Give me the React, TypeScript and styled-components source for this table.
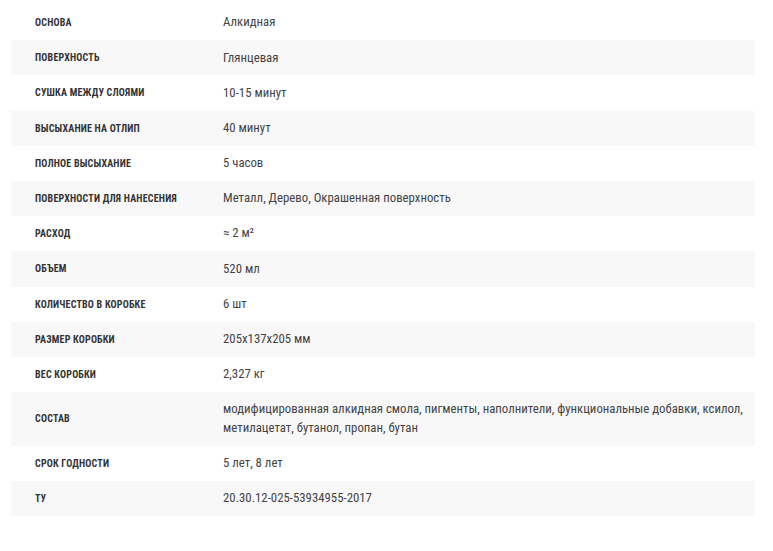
import styled, { createGlobalStyle } from "styled-components";

const GlobalStyle = createGlobalStyle`
    html, body {
        margin: 0;
        padding: 0;
        background: #fff;
    }
`

type Spec = {
    label: string,
    value: string,
}

const specs: Spec[] = [
    { label: "Основа", value: "Алкидная" },
    { label: "Поверхность", value: "Глянцевая" },
    { label: "Сушка между слоями", value: "10-15 минут" },
    { label: "Высыхание на отлип", value: "40 минут" },
    { label: "Полное высыхание", value: "5 часов" },
    { label: "Поверхности для нанесения", value: "Металл, Дерево, Окрашенная поверхность" },
    { label: "Расход", value: "≈ 2 м²" },
    { label: "Объем", value: "520 мл" },
    { label: "Количество в коробке", value: "6 шт" },
    { label: "Размер коробки", value: "205x137x205 мм" },
    { label: "Вес коробки", value: "2,327 кг" },
    { label: "Состав", value: "модифицированная алкидная смола, пигменты, наполнители, функциональные добавки, ксилол, метилацетат, бутанол, пропан, бутан" },
    { label: "Срок годности", value: "5 лет, 8 лет" },
    { label: "ТУ", value: "20.30.12-025-53934955-2017" },
]

function App() {
    return (
        <>
            <GlobalStyle />
            <Wrap>
                <Table>
                    {specs.map((s, i) => (
                        <Row key={s.label} striped={i % 2 === 1}>
                            <Label>{s.label}</Label>
                            <Value>{s.value}</Value>
                        </Row>
                    ))}
                </Table>
            </Wrap>
        </>
    )
}

export default App

const Wrap = styled.div`
    padding: 5px 18px 0 11px;
`

const Table = styled.div`
    display: flex;
    flex-direction: column;
`

const Row = styled.div<{ striped?: boolean }>`
    display: grid;
    grid-template-columns: 212px 1fr;
    align-items: center;
    background: ${props => props.striped ? "#f8f8f8" : "#fff"};
`

const Label = styled.div`
    padding: 0 12px 0 24px;
    font: 700 10px "Roboto Condensed", Roboto, sans-serif;
    letter-spacing: 0.2px;
    text-transform: uppercase;
    color: #333;
`

const Value = styled.div`
    padding: 8.35px 4px 8.35px 0;
    font: 400 12.8px / 18.5px "Roboto Condensed", Roboto, sans-serif;
    color: #444;
`
